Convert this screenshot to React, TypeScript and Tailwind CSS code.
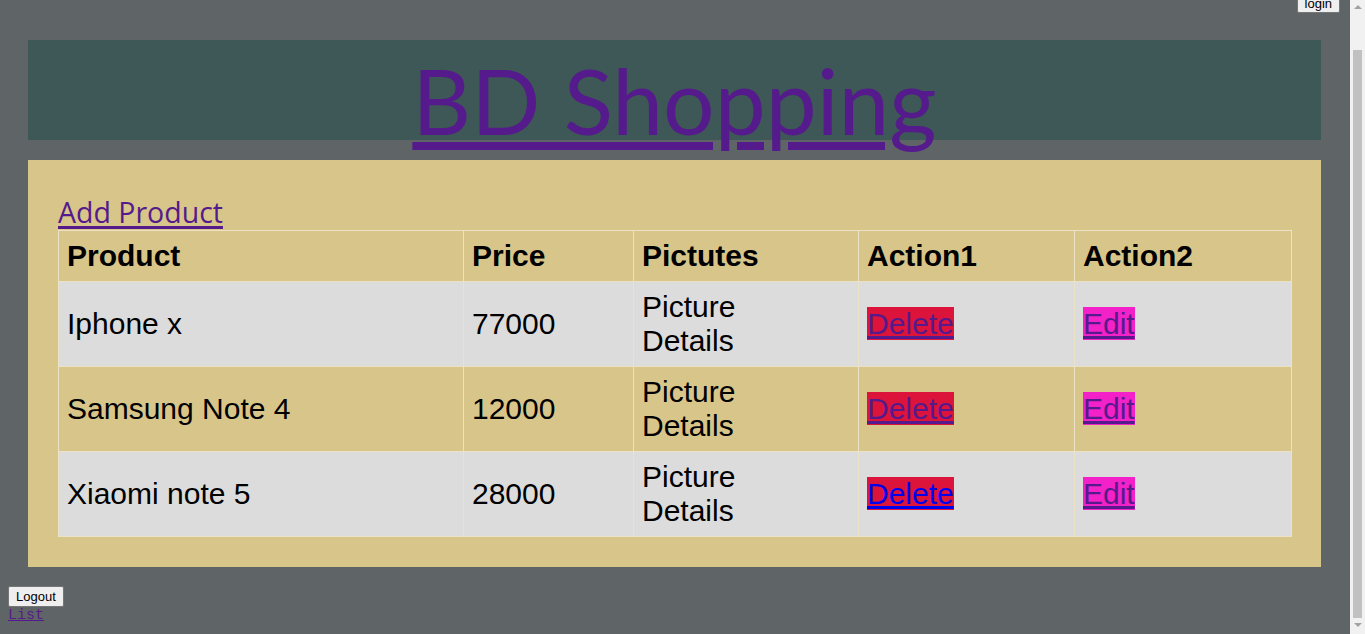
const rows = [
  { name: "Iphone x", price: "77000", bg: "bg-[#dcdcdc]", visited: true },
  { name: "Samsung Note 4", price: "12000", bg: "bg-[#d8c58a]", visited: true },
  { name: "Xiaomi note 5", price: "28000", bg: "bg-[#dcdcdc]", visited: false },
];

const cell = "border border-[#ece3c6] px-[8px] py-[8px] text-left align-middle";

function Scrollbar() {
  return (
    <div className="fixed right-0 top-0 flex h-screen w-[15px] flex-col items-center bg-[#f1f1f1]">
      <div className="mt-[5px] h-0 w-0 border-x-[4px] border-b-[4px] border-x-transparent border-b-[#a3a3a3]" />
      <div className="mt-[41px] h-[568px] w-[9px] bg-[#c1c1c1]" />
      <div className="mt-[5px] h-0 w-0 border-x-[4px] border-t-[4px] border-x-transparent border-t-[#a3a3a3]" />
    </div>
  );
}

export default function App() {
  return (
    <div className="min-h-screen overflow-hidden bg-[#5f6566] pr-[15px] font-['Liberation_Sans',Arial,sans-serif]">
      <div className="flex justify-end pr-[10px]">
        <button className="-mt-[7px] h-[20px] rounded-[2px] border border-[#767676] bg-[#efefef] px-[7px] text-[13px] leading-none text-black">
          login
        </button>
      </div>

      <div className="mx-[28px] mt-[27px] mr-[29px] flex h-[100px] justify-center bg-[#3e5757]">
        <a
          href="#"
          className="mt-[10px] h-[100px] font-['Lato',sans-serif] text-[91px] leading-[100px] text-[#551a8b] underline decoration-[8px] underline-offset-[7px]"
        >
          BD Shopping
        </a>
      </div>

      <div className="mx-[28px] mt-[20px] mr-[29px] bg-[#d8c58a] px-[30px] pb-[30px] pt-[34px]">
        <a
          href="#"
          className="block w-fit font-['Open_Sans',sans-serif] text-[28.5px] leading-[36px] text-[#551a8b] underline decoration-[3px] underline-offset-[3px]"
        >
          Add Product
        </a>
        <table className="w-full table-fixed border-collapse text-[30px] leading-[34px] text-black">
          <colgroup>
            <col className="w-[405px]" />
            <col className="w-[170px]" />
            <col className="w-[225px]" />
            <col className="w-[216px]" />
            <col className="w-[217px]" />
          </colgroup>
          <thead>
            <tr className="bg-[#d8c58a]">
              <th className={cell}>Product</th>
              <th className={cell}>Price</th>
              <th className={cell}>Pictutes</th>
              <th className={cell}>Action1</th>
              <th className={cell}>Action2</th>
            </tr>
          </thead>
          <tbody>
            {rows.map((r) => (
              <tr key={r.name} className={r.bg}>
                <td className={cell}>{r.name}</td>
                <td className={cell}>{r.price}</td>
                <td className={cell}>
                  Picture
                  <br />
                  Details
                </td>
                <td className={cell}>
                  <a
                    href="#"
                    className={`bg-[#dc143c] underline decoration-[3px] ${r.visited ? "text-[#551a8b]" : "text-[#0000ee]"}`}
                  >
                    Delete
                  </a>
                </td>
                <td className={cell}>
                  <a href="#" className="bg-[#f222c8] text-[#551a8b] underline decoration-[3px]">
                    Edit
                  </a>
                </td>
              </tr>
            ))}
          </tbody>
        </table>
      </div>

      <div className="ml-[8px] mt-[17px]">
        <button className="h-[21px] rounded-[2px] border border-[#767676] bg-[#efefef] px-[7px] text-[13px] leading-none text-black">
          Logout
        </button>
        <a href="#" className="block w-fit font-['Liberation_Mono',monospace] text-[15px] leading-[15px] text-[#551a8b] underline">
          List
        </a>
      </div>

      <Scrollbar />
    </div>
  );
}
